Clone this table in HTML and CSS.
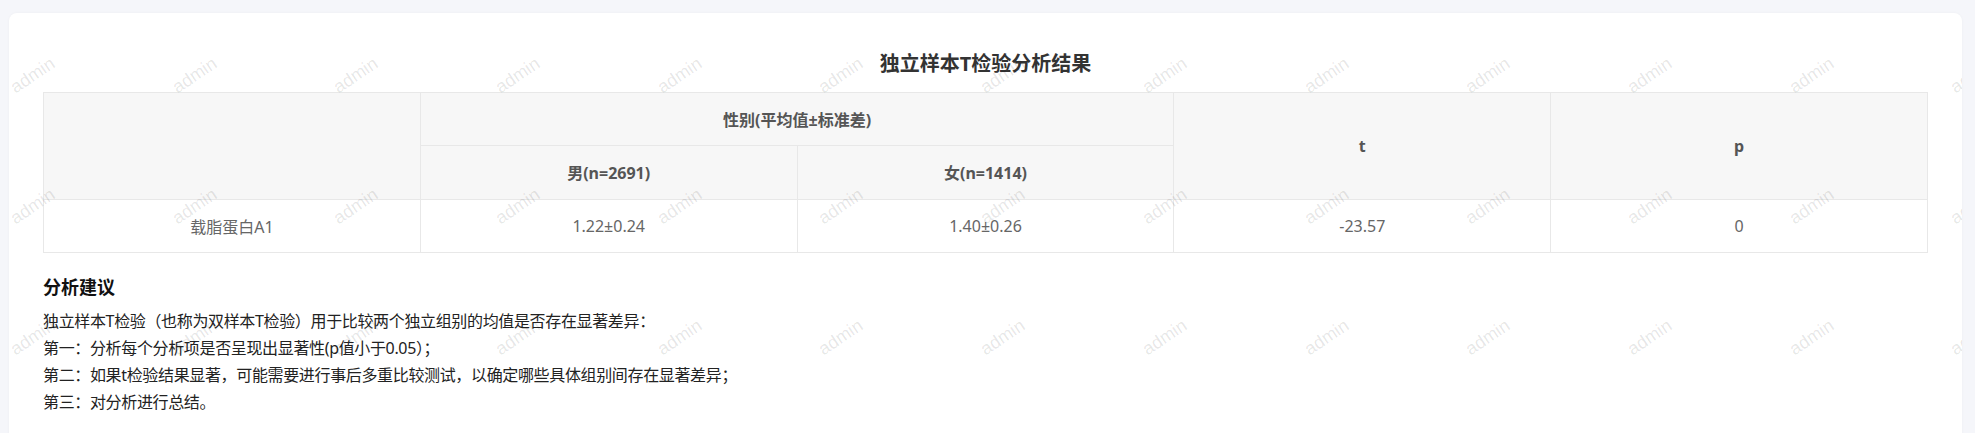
FILE: index.html
```html
<!DOCTYPE html>
<html lang="zh-CN">
<head>
<meta charset="UTF-8" />
<meta name="viewport" content="width=device-width, initial-scale=1" />
<title>独立样本T检验</title>
<link rel="stylesheet" href="styles.css">
</head>
<body>

<div class="card">
  <h2 class="title">独立样本T检验分析结果</h2>
  <table class="result">
    <thead>
      <tr class="group-row">
        <th rowspan="2"></th>
        <th colspan="2">性别(平均值±标准差)</th>
        <th rowspan="2">t</th>
        <th rowspan="2">p</th>
      </tr>
      <tr>
        <th>男(n=2691)</th>
        <th>女(n=1414)</th>
      </tr>
    </thead>
    <tbody>
      <tr>
        <td>载脂蛋白A1</td>
        <td>1.22±0.24</td>
        <td>1.40±0.26</td>
        <td>-23.57</td>
        <td>0</td>
      </tr>
    </tbody>
  </table>

  <div class="advice">
    <h3>分析建议</h3>
    <p>独立样本T检验（也称为双样本T检验）用于比较两个独立组别的均值是否存在显著差异：</p>
    <p>第一：分析每个分析项是否呈现出显著性(p值小于0.05）；</p>
    <p>第二：如果t检验结果显著，可能需要进行事后多重比较测试，以确定哪些具体组别间存在显著差异；</p>
    <p>第三：对分析进行总结。</p>
  </div>

  <div class="watermark" id="watermark"></div>
</div>

<script>
  const mark = document.getElementById('watermark');
  for (let i = 0; i < 13 * 4; i++) {
    const span = document.createElement('span');
    span.textContent = 'admin';
    mark.appendChild(span);
  }
</script>

</body>
</html>
```

FILE: styles.css
```css
* {
  box-sizing: border-box;
}
body {
  margin: 0;
  padding: 13px 13px 0 9px;
  font-family: "Noto Sans", "Noto Sans CJK SC", sans-serif;
  background: #f5f6fa;
  color: #333;
}
.card {
  position: relative;
  overflow: hidden;
  background: #fff;
  border-radius: 8px;
  box-shadow: 0 0 3px rgba(0,0,0,0.04);
  padding: 37px 34px 40px;
}
.title {
  margin: 0 0 14px;
  text-align: center;
  font-size: 20px;
  line-height: 28px;
  font-weight: 700;
  color: #333;
}
.result {
  width: 100%;
  border-collapse: collapse;
  table-layout: fixed;
  font-size: 16px;
}
.result th, .result td {
  height: 53.6px;
  padding: 0 10px;
  border: 1px solid #e8e8e8;
  text-align: center;
}
.result .group-row th {
  height: 53px;
}
.result th {
  background: #f7f7f7;
  color: #555;
  font-weight: 700;
}
.result td {
  color: #666;
}

.advice h3 {
  margin: 21px 0 8px;
  font-size: 18px;
  line-height: 26px;
  font-weight: 700;
  color: #111;
}
.advice p {
  margin: 0;
  font-size: 16px;
  line-height: 27px;
  letter-spacing: -0.35px;
  color: #222;
}

.watermark {
  position: absolute;
  top: -3px;
  left: -57px;
  display: grid;
  grid-template-columns: repeat(13, 161.7px);
  grid-auto-rows: 131px;
  pointer-events: none;
}
.watermark span {
  display: flex;
  align-items: center;
  justify-content: center;
  font-family: "Liberation Sans", Arial, sans-serif;
  font-size: 18px;
  color: rgba(0,0,0,0.1);
  transform: rotate(-34deg);
}
```
